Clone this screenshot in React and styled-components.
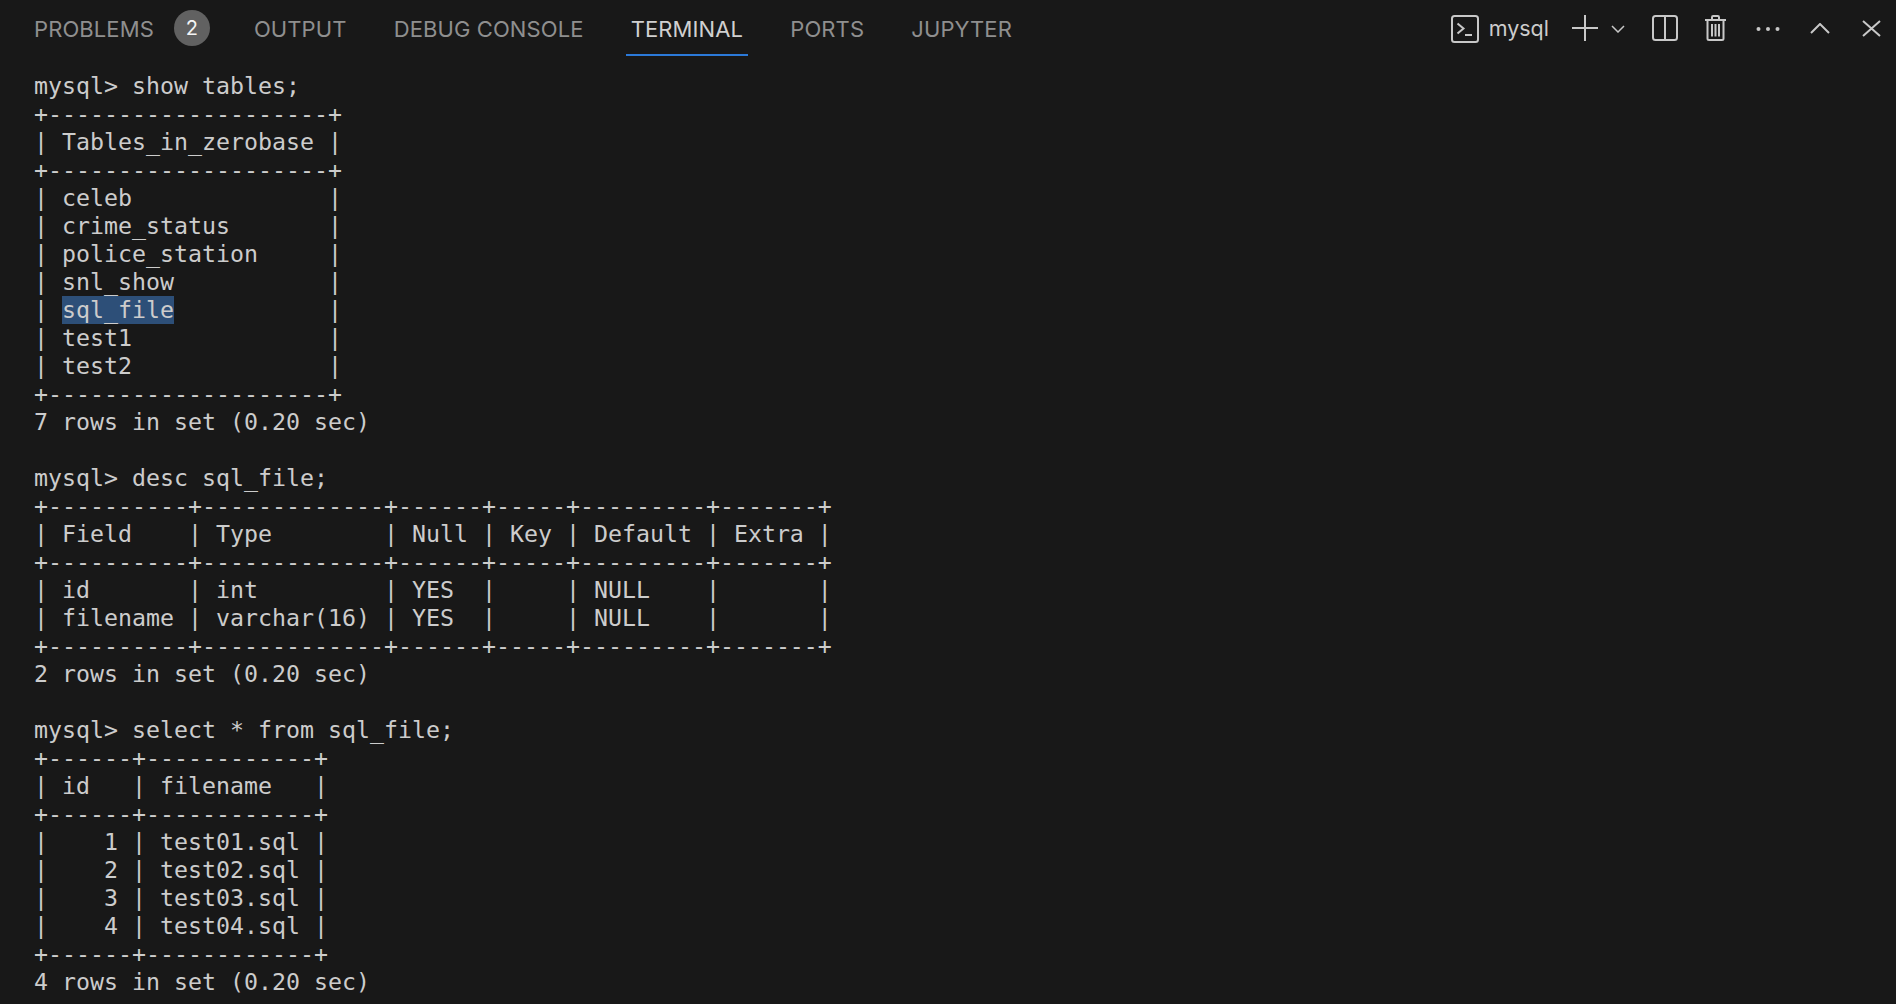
import React from "react";
import styled, { createGlobalStyle } from "styled-components";

const GlobalStyle = createGlobalStyle`
  html, body {
    margin: 0;
    height: 100%;
    background: #181818;
  }
`;

const Panel = styled.div`
  width: 1896px;
  height: 1004px;
  overflow: hidden;
  background: #181818;
`;

const Header = styled.div`
  display: flex;
  align-items: flex-start;
  height: 72px;
  padding-left: 34px;
  padding-right: 15px;
`;

const Tabs = styled.div`
  display: flex;
  gap: 47.2px;
`;

const Tab = styled.div`
  display: flex;
  align-items: center;
  height: 56px;
  box-sizing: border-box;
  padding: 3px 5px 0;
  margin: 0 -5px;
  font-family: Inter, "Liberation Sans", sans-serif;
  font-size: 22px;
  letter-spacing: 0.1px;
  color: ${(props) => (props.$active ? "#d0d0d0" : "#8f8f8f")};
  border-bottom: 2px solid ${(props) => (props.$active ? "#2b79d8" : "transparent")};
`;

const Badge = styled.span`
  display: flex;
  align-items: center;
  justify-content: center;
  width: 36px;
  height: 36px;
  margin-left: 20px;
  margin-right: -3.2px;
  margin-top: -2px;
  border-radius: 50%;
  background: #616161;
  color: #f4f4f4;
  font-size: 20px;
`;

const Actions = styled.div`
  display: flex;
  align-items: center;
  height: 56px;
  margin-left: auto;
  color: #c8c8c8;
`;

const ShellName = styled.span`
  margin: 0 23px 0 10px;
  font-family: Inter, "Liberation Sans", sans-serif;
  font-size: 21.5px;
  color: #cccccc;
`;

const Icon = styled.svg`
  display: block;
  flex: none;
  margin-left: ${(props) => props.$gap || 0}px;
  margin-top: ${(props) => props.$drop || 0}px;
  fill: none;
  stroke: currentColor;
  stroke-width: ${(props) => props.$stroke || 2};
`;

const DotsIcon = styled(Icon)`
  fill: currentColor;
  stroke: none;
`;

const Terminal = styled.div`
  padding-left: 34px;
  font-family: "DejaVu Sans Mono", "Liberation Mono", monospace;
  font-size: 23.25px;
  color: #cccccc;
`;

const Line = styled.div`
  height: 28px;
  line-height: 28px;
  white-space: pre;
`;

const Selected = styled.span`
  display: inline-block;
  height: 28px;
  background: #2d4f78;
`;

const lines = [
  "mysql> show tables;",
  "+--------------------+",
  "| Tables_in_zerobase |",
  "+--------------------+",
  "| celeb              |",
  "| crime_status       |",
  "| police_station     |",
  "| snl_show           |",
  ["| ", "sql_file", "           |"],
  "| test1              |",
  "| test2              |",
  "+--------------------+",
  "7 rows in set (0.20 sec)",
  "",
  "mysql> desc sql_file;",
  "+----------+-------------+------+-----+---------+-------+",
  "| Field    | Type        | Null | Key | Default | Extra |",
  "+----------+-------------+------+-----+---------+-------+",
  "| id       | int         | YES  |     | NULL    |       |",
  "| filename | varchar(16) | YES  |     | NULL    |       |",
  "+----------+-------------+------+-----+---------+-------+",
  "2 rows in set (0.20 sec)",
  "",
  "mysql> select * from sql_file;",
  "+------+------------+",
  "| id   | filename   |",
  "+------+------------+",
  "|    1 | test01.sql |",
  "|    2 | test02.sql |",
  "|    3 | test03.sql |",
  "|    4 | test04.sql |",
  "+------+------------+",
  "4 rows in set (0.20 sec)",
];

const App = () => {
  return (
    <Panel>
      <GlobalStyle />
      <Header>
        <Tabs>
          <Tab>
            PROBLEMS
            <Badge>2</Badge>
          </Tab>
          <Tab>OUTPUT</Tab>
          <Tab>DEBUG CONSOLE</Tab>
          <Tab $active>TERMINAL</Tab>
          <Tab>PORTS</Tab>
          <Tab>JUPYTER</Tab>
        </Tabs>
        <Actions>
          <Icon width="28" height="28" viewBox="0 0 28 28" $drop="2">
            <rect x="1" y="1" width="26" height="26" rx="2.5" />
            <path d="M6.500 8.500l6 5-6 5M14 20h7" />
          </Icon>
          <ShellName>mysql</ShellName>
          <Icon width="26" height="26" viewBox="0 0 26 26">
            <path d="M0 13h26M13 0v26" />
          </Icon>
          <Icon width="14" height="8" viewBox="0 0 14 8" $gap="13" $stroke="1.500" $drop="2">
            <path d="M1 1l6 6 6-6" />
          </Icon>
          <Icon width="26" height="26" viewBox="0 0 26 26" $gap="27">
            <rect x="1" y="1" width="24" height="24" rx="2.500" />
            <path d="M13 1v24" />
          </Icon>
          <Icon width="21" height="26" viewBox="0 0 21 26" $gap="27">
            <path d="M0 5h21M7 5V2.200Q7 1 8.200 1h4.600Q14 1 14 2.200V5M2.500 5v18.500Q2.500 25 4 25h13q1.500 0 1.500-1.500V5M7 9v12.500M10.500 9v12.500M14 9v12.500" />
          </Icon>
          <DotsIcon width="24" height="6" viewBox="0 0 24 6" $gap="30" $drop="2">
            <circle cx="2.500" cy="3" r="2" />
            <circle cx="12" cy="3" r="2" />
            <circle cx="21.500" cy="3" r="2" />
          </DotsIcon>
          <Icon width="20" height="11" viewBox="0 0 20 11" $gap="30">
            <path d="M1 10l9-9 9 9" />
          </Icon>
          <Icon width="19" height="17" viewBox="0 0 19 17" $gap="32">
            <path d="M1 1l17 15M18 1L1 16" />
          </Icon>
        </Actions>
      </Header>
      <Terminal>
        {lines.map((line, i) => (
          <Line key={i}>
            {Array.isArray(line) ? (
              <>
                {line[0]}
                <Selected>{line[1]}</Selected>
                {line[2]}
              </>
            ) : (
              line
            )}
          </Line>
        ))}
      </Terminal>
    </Panel>
  );
};

export default App;
